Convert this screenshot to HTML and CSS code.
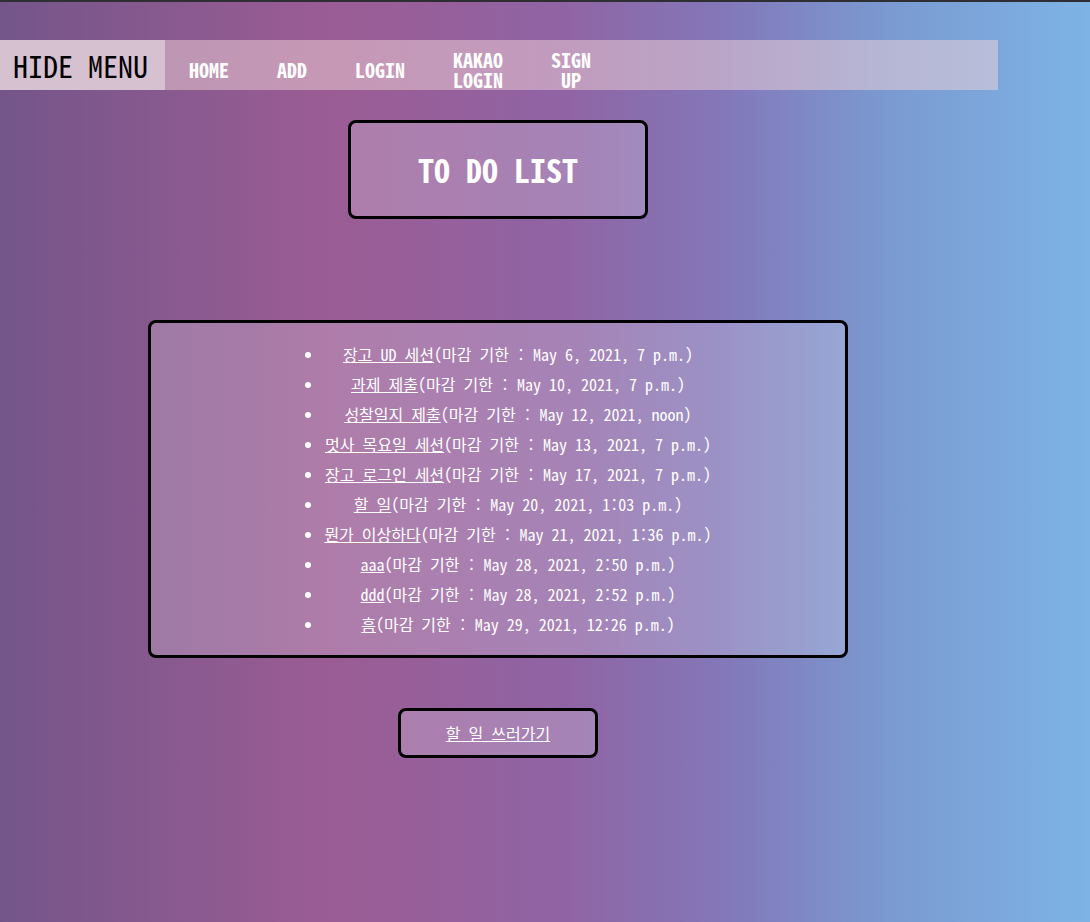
FILE: index.html
```html
<!DOCTYPE html>
<html lang="ko">
<head>
<meta charset="utf-8">
<title>TO DO LIST</title>
<link rel="stylesheet" href="styles.css">
</head>
<body>
<div class="topline"></div>
<nav class="nav">
  <button class="hide-btn">HIDE MENU</button>
  <ul class="menu">
    <li><a href="#">HOME</a></li>
    <li><a href="#">ADD</a></li>
    <li><a href="#">LOGIN</a></li>
    <li><a href="#">KAKAO LOGIN</a></li>
    <li><a href="#">SIGN UP</a></li>
  </ul>
</nav>
<main class="wrap">
  <h1 class="title">TO DO LIST</h1>
  <section class="list-box">
    <ul class="todo">
      <li><a href="#">장고 UD 세션</a>(마감 기한 : May 6, 2021, 7 p.m.)</li>
      <li><a href="#">과제 제출</a>(마감 기한 : May 10, 2021, 7 p.m.)</li>
      <li><a href="#">성찰일지 제출</a>(마감 기한 : May 12, 2021, noon)</li>
      <li><a href="#">멋사 목요일 세션</a>(마감 기한 : May 13, 2021, 7 p.m.)</li>
      <li><a href="#">장고 로그인 세션</a>(마감 기한 : May 17, 2021, 7 p.m.)</li>
      <li><a href="#">할 일</a>(마감 기한 : May 20, 2021, 1:03 p.m.)</li>
      <li><a href="#">뭔가 이상하다</a>(마감 기한 : May 21, 2021, 1:36 p.m.)</li>
      <li><a href="#">aaa</a>(마감 기한 : May 28, 2021, 2:50 p.m.)</li>
      <li><a href="#">ddd</a>(마감 기한 : May 28, 2021, 2:52 p.m.)</li>
      <li><a href="#">흠</a>(마감 기한 : May 29, 2021, 12:26 p.m.)</li>
    </ul>
  </section>
  <a class="write-btn" href="#">할 일 쓰러가기</a>
</main>
</body>
</html>
```
FILE: styles.css
```css
html, body {
  margin: 0;
  padding: 0;
}
body {
  width: 1090px;
  min-height: 922px;
  background: linear-gradient(to right, #74558a 0%, #8b5a90 18%, #9b5c94 30%, #9064a4 52%, #8377b8 66%, #7a9bd2 82%, #7eb3e6 100%);
  font-family: "Noto Sans Mono CJK KR", "Noto Sans CJK KR", "DejaVu Sans Mono", monospace;
  color: #fff;
  overflow: hidden;
}
.topline {
  height: 2px;
  background: #2e2e33;
}
.nav {
  margin-top: 38px;
  width: 998px;
  height: 50px;
  display: flex;
  background: rgba(242, 212, 215, 0.5);
}
.hide-btn {
  width: 165px;
  height: 50px;
  border: 0;
  margin: 0;
  padding: 0 4px 0 0;
  background: #d6c1d1;
  color: #000;
  font-family: inherit;
  font-size: 30px;
  font-weight: 400;
  line-height: 50px;
  text-align: center;
}
.menu {
  list-style: none;
  margin: 0;
  padding: 10px 0 0 0;
  display: flex;
  align-items: center;
}
.menu li {
  padding: 0 24px;
  width: min-content;
  text-align: center;
  font-size: 20px;
  font-weight: 700;
  line-height: 20px;
}
.menu a {
  color: #fff;
  text-decoration: none;
}
.wrap {
  width: 996px;
  display: flex;
  flex-direction: column;
  align-items: center;
}
.title {
  margin: 30px 0 0 0;
  width: 294px;
  padding: 28px 0;
  line-height: 37px;
  font-size: 32px;
  font-weight: 700;
  text-align: center;
  border: 3px solid #000;
  border-radius: 8px;
  background: rgba(255, 255, 255, 0.2);
}
.list-box {
  margin-top: 101px;
  width: 694px;
  border: 3px solid #000;
  border-radius: 8px;
  background: rgba(255, 255, 255, 0.2);
  text-align: center;
}
.todo {
  display: inline-block;
  margin: 16px 0;
  padding-left: 40px;
  font-size: 16px;
  line-height: 30px;
}
.todo li {
  text-align: center;
}
.todo a {
  color: #fff;
  text-decoration: underline;
}
.write-btn {
  margin-top: 50px;
  width: 194px;
  height: 44px;
  line-height: 44px;
  border: 3px solid #000;
  border-radius: 8px;
  background: rgba(255, 255, 255, 0.2);
  color: #fff;
  font-size: 16px;
  text-align: center;
  text-decoration: underline;
}
```
